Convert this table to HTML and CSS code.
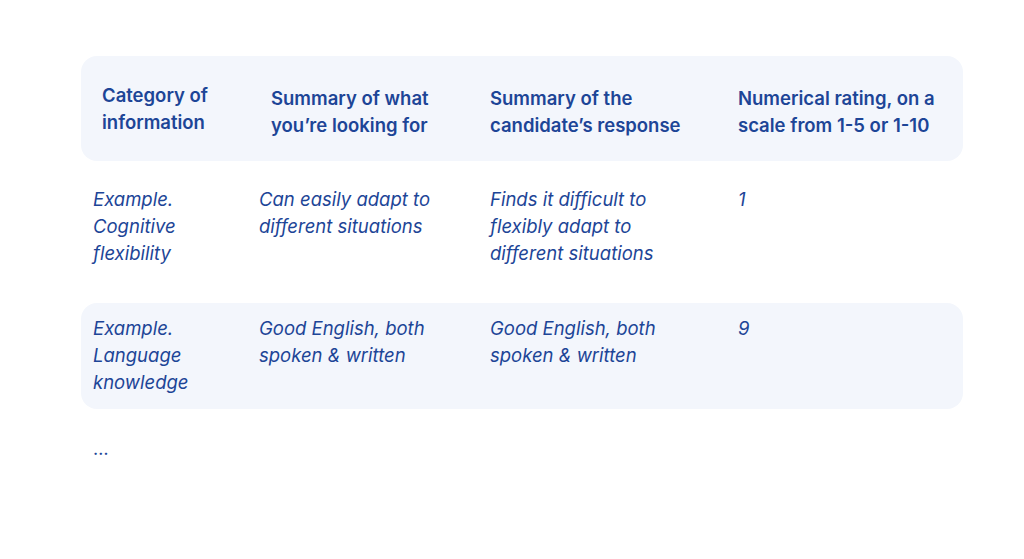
FILE: index.html
```html
<!DOCTYPE html>
<html lang="en">
<head>
<meta charset="utf-8">
<title>Interview evaluation table</title>
<link rel="stylesheet" href="styles.css">
</head>
<body>
<div class="page">
  <div class="table">
    <div class="row head">
      <div class="cell c1 first">Category of information</div>
      <div class="cell c2">Summary of what you’re looking for</div>
      <div class="cell c3">Summary of the candidate’s response</div>
      <div class="cell c4">Numerical rating, on a scale from 1-5 or 1-10</div>
    </div>
    <div class="row body">
      <div class="cell c1">Example. Cognitive flexibility</div>
      <div class="cell c2">Can easily adapt to different situations</div>
      <div class="cell c3">Finds it difficult to flexibly adapt to different situations</div>
      <div class="cell c4">1</div>
    </div>
    <div class="row body shaded">
      <div class="cell c1">Example. Language knowledge</div>
      <div class="cell c2">Good English, both spoken &amp; written</div>
      <div class="cell c3">Good English, both spoken &amp; written</div>
      <div class="cell c4">9</div>
    </div>
  </div>
  <div class="more">…</div>
</div>
</body>
</html>
```
FILE: styles.css
```css
html, body {
  margin: 0;
  padding: 0;
  background: #ffffff;
}
body {
  font-family: "Inter", "Liberation Sans", sans-serif;
  color: #1d4597;
}
.page {
  width: 1024px;
  height: 559px;
  padding: 56px 0 0 81px;
  box-sizing: border-box;
}
.table {
  width: 882px;
  display: flex;
  flex-direction: column;
}
.row {
  display: grid;
  grid-template-columns: 166px 231px 248px 1fr;
  border-radius: 16px;
}
.head {
  background: #f3f6fc;
  height: 105px;
  padding: 26px 0 0 12px;
  box-sizing: border-box;
  font-size: 18.5px;
  font-weight: 600;
  line-height: 27px;
}
.head .cell {
  padding-top: 3px;
}
.head .cell.first {
  padding: 0 0 0 9px;
  max-width: 140px;
}
.head .c2 {
  padding-left: 12px;
  max-width: 185px;
}
.head .c3 {
  max-width: 215px;
}
.head .c4 {
  max-width: 225px;
}
.body {
  font-size: 18.5px;
  font-style: italic;
  line-height: 27px;
  padding: 0 0 0 12px;
  box-sizing: border-box;
}
.body:nth-child(2) {
  margin-top: 25px;
  height: 117px;
}
.shaded {
  background: #f3f6fc;
  height: 106px;
  padding-top: 12px;
}
.body .c1 {
  max-width: 115px;
}
.body .c2 {
  max-width: 205px;
}
.body .c3 {
  max-width: 200px;
}
.more {
  margin: 26px 0 0 12px;
  font-size: 18px;
  line-height: 27px;
}
```
